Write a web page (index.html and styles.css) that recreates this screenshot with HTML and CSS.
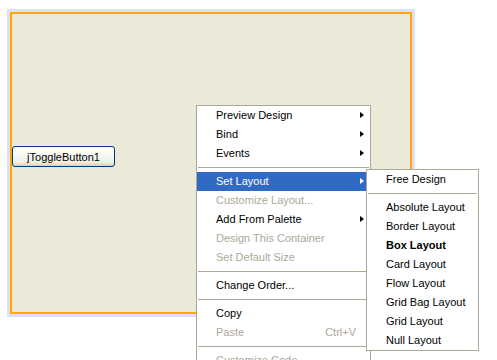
FILE: index.html
```html
<!DOCTYPE html>
<html lang="en">
<head>
    <meta charset="UTF-8">
    <title>Form Designer</title>
    <link rel="stylesheet" href="styles.css">
</head>
<body>
    <div class="design-frame">
        <div class="form-canvas">
            <button class="toggle-btn">jToggleButton1</button>
        </div>
    </div>

    <ul class="menu main-menu">
        <li class="item sub">Preview Design</li>
        <li class="item sub">Bind</li>
        <li class="item sub">Events</li>
        <li class="sep"></li>
        <li class="item sub active">Set Layout</li>
        <li class="item disabled">Customize Layout...</li>
        <li class="item sub">Add From Palette</li>
        <li class="item disabled">Design This Container</li>
        <li class="item disabled">Set Default Size</li>
        <li class="sep"></li>
        <li class="item">Change Order...</li>
        <li class="sep"></li>
        <li class="item">Copy</li>
        <li class="item disabled">Paste<span class="shortcut">Ctrl+V</span></li>
        <li class="sep"></li>
        <li class="item disabled">Customize Code...</li>
    </ul>

    <ul class="menu sub-menu">
        <li class="item">Free Design</li>
        <li class="sep"></li>
        <li class="item">Absolute Layout</li>
        <li class="item">Border Layout</li>
        <li class="item current">Box Layout</li>
        <li class="item">Card Layout</li>
        <li class="item">Flow Layout</li>
        <li class="item">Grid Bag Layout</li>
        <li class="item">Grid Layout</li>
        <li class="item">Null Layout</li>
    </ul>
</body>
</html>
```

FILE: styles.css
```css
:root {
    --canvas: #ece9d8;
    --frame: #dfdff7;
    --outline: #ffa800;
    --menu-border: #aca899;
    --disabled: #aca899;
    --highlight: #316ac5;
}

body {
    margin: 0;
    font-family: "Liberation Sans", Arial, sans-serif;
    font-size: 11px;
    color: #000;
    background: #fff;
    overflow: hidden;
}

.design-frame {
    margin: 9px 0 0 7px;
    width: 402px;
    height: 302px;
    padding: 3px;
    background: var(--frame);
}

.form-canvas {
    height: 298px;
    border: 2px solid var(--outline);
    background: var(--canvas);
}

.toggle-btn {
    display: block;
    margin-top: 132px;
    width: 103px;
    height: 21px;
    padding: 0;
    border: 1px solid #003c74;
    border-radius: 3px;
    background: linear-gradient(#ffffff, #f0f0ea 80%, #d6d0c5);
    font-family: inherit;
    font-size: 11px;
    color: #000;
}

/* Popup menus */
.menu {
    position: absolute;
    margin: 0;
    padding: 0;
    list-style: none;
    background: #fff;
    border: 1px solid var(--menu-border);
}

.main-menu {
    left: 196px;
    top: 105px;
    width: 173px;
}

.sub-menu {
    left: 366px;
    top: 169px;
    width: 111px;
}

.item {
    box-sizing: border-box;
    display: flex;
    align-items: center;
    height: 19px;
    padding: 0 14px 2px 19px;
    white-space: nowrap;
    position: relative;
}

.item.disabled {
    color: var(--disabled);
}

.item.active {
    background: var(--highlight);
    color: #fff;
}

.item.current {
    font-weight: bold;
}

.sub::after {
    content: "";
    position: absolute;
    right: 6px;
    top: 6px;
    border-left: 4px solid currentColor;
    border-top: 3.5px solid transparent;
    border-bottom: 3.5px solid transparent;
}

.shortcut {
    margin-left: auto;
}

.sep {
    height: 1px;
    margin: 4px 1px 4px 1px;
    background: var(--menu-border);
}
```
